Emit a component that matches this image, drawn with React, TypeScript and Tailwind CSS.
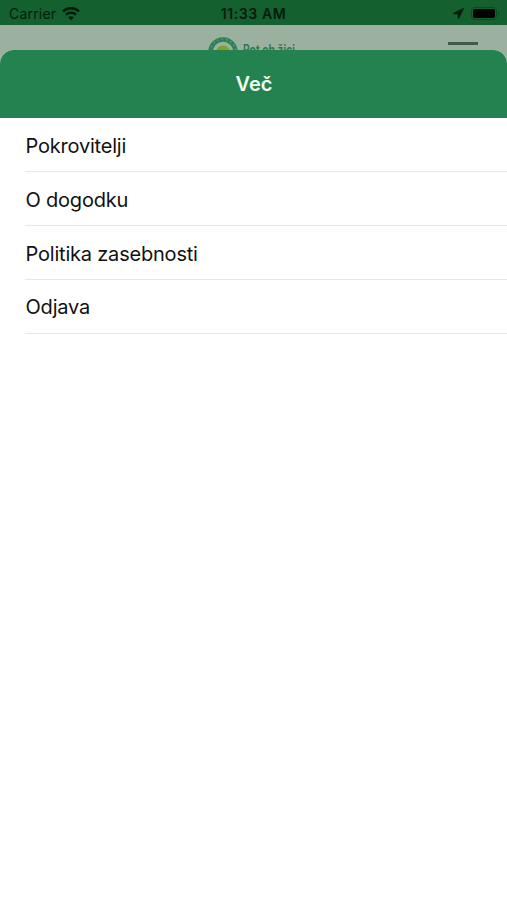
const items = ["Pokrovitelji", "O dogodku", "Politika zasebnosti", "Odjava"];

function WifiIcon() {
  return (
    <svg width="18" height="14" viewBox="0 0 18 14" fill="none" stroke="#031b0c" strokeWidth="2.5">
      <path d="M1 4.4C5.6 0.2 12.4 0.2 17 4.4" />
      <path d="M4 7.8C6.9 5.2 11.1 5.2 14 7.8" />
      <path d="M9 13.2L6.2 10.3C7.8 8.9 10.2 8.9 11.8 10.3Z" fill="#031b0c" stroke="none" />
    </svg>
  );
}

function LocationIcon() {
  return (
    <svg width="11" height="11" viewBox="0 0 11 11" fill="#031b0c" stroke="#031b0c" strokeWidth="0.7" strokeLinejoin="round">
      <path d="M10.5 0.4L0.5 5.2L0.6 5.8L5 6L5.2 10.4L5.8 10.4Z" />
    </svg>
  );
}

function BatteryIcon() {
  return (
    <svg width="29" height="13" viewBox="0 0 29 13">
      <rect x="0.5" y="0.5" width="25" height="12" rx="3.4" fill="none" stroke="#0c4a26" />
      <rect x="2" y="2" width="22" height="9" rx="2" fill="#010402" />
      <path d="M27 4.3C28.6 5 28.6 8 27 8.7Z" fill="#0c4a26" />
    </svg>
  );
}

function StatusBar() {
  return (
    <div className="grid h-[25px] grid-cols-3 items-center bg-[#14602f] text-[#031b0c]">
      <div className="flex items-center gap-[6px] pt-[2px] pl-[9px]">
        <span className="text-[14px] leading-4 tracking-[0.2px]">Carrier</span>
        <WifiIcon />
      </div>
      <span className="pt-[2px] text-center text-[14px] leading-4 font-semibold tracking-[0.6px]">11:33 AM</span>
      <div className="flex items-center justify-end gap-[7px] pt-[2px] pr-[7px]">
        <LocationIcon />
        <BatteryIcon />
      </div>
    </div>
  );
}

function Logo() {
  return (
    <div className="flex items-start gap-[5px]">
      <svg width="30" height="30" viewBox="0 0 30 30" fill="none">
        <circle cx="15" cy="15" r="12.5" stroke="#2b8257" strokeWidth="4.5" />
        <circle cx="15" cy="15" r="12.8" stroke="#5b9a78" strokeWidth="1.6" strokeDasharray="1.5 3" />
        <circle cx="15" cy="15.5" r="7" fill="#7aa51c" />
      </svg>
      <span className="mt-[4px] origin-left scale-x-[0.74] text-[14px] leading-[17px] font-semibold whitespace-nowrap text-[#2c7650]">
        Pot ob žici
      </span>
    </div>
  );
}

export default function App() {
  return (
    <div className="flex h-[900px] w-[507px] flex-col overflow-hidden bg-white font-['Inter','Liberation_Sans',sans-serif]">
      <StatusBar />
      {/* Page behind the sheet */}
      <div className="flex h-[50px] shrink-0 items-start justify-between bg-[#9bb09f] pr-[29px] pl-[208px]">
        <div className="pt-[12px]">
          <Logo />
        </div>
        <div className="mt-[17px] h-[3px] w-[30px] bg-[#405b49]" />
      </div>
      {/* Sheet */}
      <div className="relative -mt-[25px] flex-1 overflow-hidden rounded-t-[14px] bg-white">
        <div className="flex h-[68px] items-center justify-center bg-[#23824f]">
          <h1 className="pl-px text-[20px] leading-6 font-semibold text-[#f1fbef]">Več</h1>
        </div>
        <ul className="pt-[0.4px] pl-[25px]">
          {items.map((item) => (
            <li
              key={item}
              className="flex h-[53.8px] items-center border-b border-[#e8e8e8] pt-[2.4px] pl-[0.5px] text-[20px] tracking-[-0.2px] text-[#111]"
            >
              {item}
            </li>
          ))}
        </ul>
      </div>
    </div>
  );
}
